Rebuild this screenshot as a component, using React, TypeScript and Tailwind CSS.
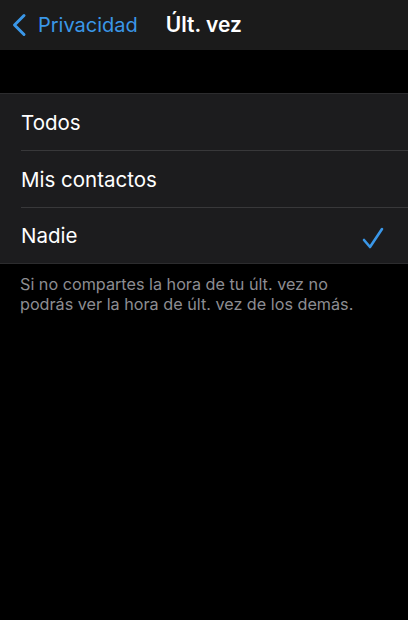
import React from "react";

export default function App() {
  const rows = ["Todos", "Mis contactos", "Nadie"];
  return (
    <div
      className="w-[408px] h-[620px] bg-black text-white overflow-hidden"
      style={{ fontFamily: "Inter, 'Noto Sans', sans-serif" }}
    >
      <div className="h-[50px] bg-[#1b1b1b] flex items-center">
        <div className="flex items-center pl-[11px] text-[#3a97e8]">
          <svg width="16" height="24" viewBox="0 0 16 24" fill="none">
            <path d="M13 2.5 L3.5 12 L13 21.5" stroke="#3a97e8" strokeWidth="3" strokeLinecap="round" strokeLinejoin="round" />
          </svg>
          <span className="ml-[11px] text-[20px]">Privacidad</span>
        </div>
        <span className="ml-[28px] text-[21px] font-semibold">Últ. vez</span>
      </div>
      <div className="h-[43px]" />
      <div className="bg-[#1c1c1e] border-y border-[#2c2c2e]">
        {rows.map((r, i) => (
          <div key={r} className="flex">
            <div
              className={
                i === 2
                  ? "flex-1 ml-[21px] flex items-center justify-between h-[55px] pt-[1px]"
                  : "flex-1 ml-[21px] flex items-center justify-between h-[57px] pt-[2px] border-b border-[#38383a]"
              }
            >
              <span className="text-[20.5px]">{r}</span>
              {i === 2 && (
                <svg className="mr-[24px] mt-[3px]" width="22" height="24" viewBox="0 0 22 24" fill="none">
                  <path d="M2 14 L8 21 L20 3" stroke="#3a97e8" strokeWidth="2.6" strokeLinecap="round" strokeLinejoin="round" />
                </svg>
              )}
            </div>
          </div>
        ))}
      </div>
      <p className="pl-[20px] pr-[44px] pt-[10px] text-[16.2px] leading-[20px] text-[#8d8d92]">
        Si no compartes la hora de tu últ. vez no podrás ver la hora de últ. vez de los demás.
      </p>
    </div>
  );
}
